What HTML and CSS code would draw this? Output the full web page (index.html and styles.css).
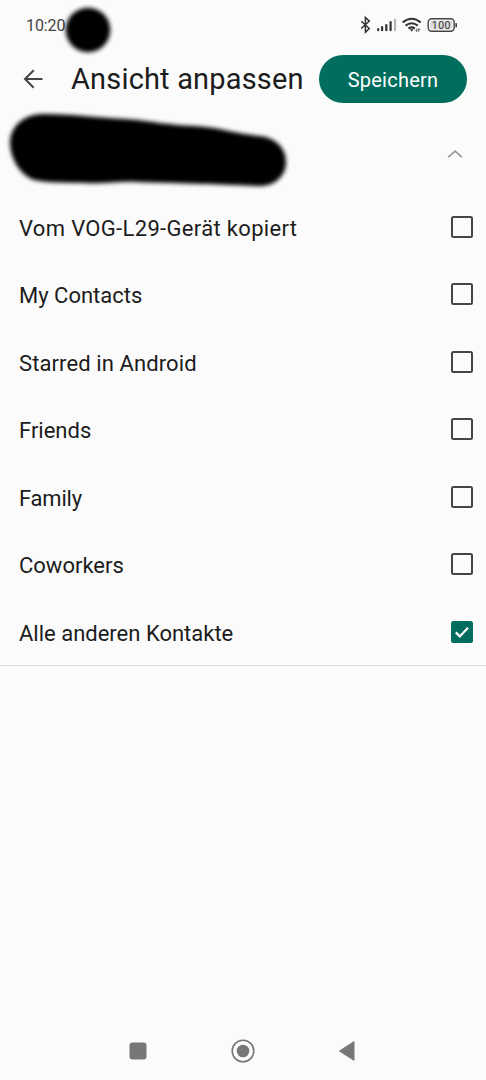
FILE: index.html
```html
<!DOCTYPE html>
<html lang="de">
<head>
<meta charset="utf-8">
<title>Ansicht anpassen</title>
<link rel="stylesheet" href="styles.css">
</head>
<body>
<div class="screen">
  <div class="status-bar">
    <span class="clock">10:20</span>
    <svg class="status-icons" width="100" height="20" viewBox="360 15 100 20">
      <path d="M361.3 21.2l8 7.3-3.9 3.7V17.4l3.9 3.7-8 7.4" fill="none" stroke="#333" stroke-width="1.5"/>
      <path d="M378.2 29v1.2M382.1 27.2v3M386.3 25v5.2M390.6 22v8.2" stroke="#333" stroke-width="2.2" stroke-linecap="round"/>
      <path d="M395 19.8v10.4" stroke="#b5b5b5" stroke-width="2.2" stroke-linecap="round"/>
      <g fill="none" stroke="#333" stroke-width="2">
        <path d="M402.7 22.4q9-7.2 18 0M405.6 25.6q6.1-4.8 12.2 0M408.5 28.6q3.2-2.4 6.4 0"/>
      </g>
      <path d="M409.8 29.3h3.8l-1.9 2.4z" fill="#333"/>
      <path d="M416.8 28.6v3l-1.2-1.2M418.8 31.6v-3l1.2 1.2" fill="none" stroke="#444" stroke-width="1"/>
      <rect x="428.2" y="18.7" width="26" height="12.5" rx="3.6" fill="#fbfbfb" stroke="#444" stroke-width="1.4"/>
      <rect x="430" y="20.5" width="22.4" height="8.9" rx="2" fill="#dedede"/>
      <path d="M456.2 23.7v3" stroke="#333" stroke-width="1.5" stroke-linecap="round"/>
      <text class="battery-text" x="441.4" y="28.7" text-anchor="middle">100</text>
    </svg>
    <svg class="redaction-dot" width="60" height="60" viewBox="58 0 60 60"><circle cx="88" cy="30" r="22.3"/></svg>
  </div>
  <header class="app-bar">
    <svg class="back" width="24" height="24" viewBox="21 67 24 24"><path d="M42.5 79H25M33.7 70.3L25 79l8.7 8.7" fill="none" stroke="#444" stroke-width="2"/></svg>
    <h1 class="title">Ansicht anpassen</h1>
    <button class="save"><span>Speichern</span></button>
  </header>
  <section class="account">
    <svg class="redaction" width="300" height="85" viewBox="0 108 300 85"><path d="M43 114C75 114 98 118 126 119C152 121 165 125 195 126C219 127 236 134 260 136C276 138 286 148 286 162C286 176 275 187 257 186C216 184 172 183 137 182C119 181 105 184 87 183C68 182 52 184 34 180C20 175 10 158 10 142C11 125 25 114 43 114Z"/></svg>
    <svg class="chevron" width="16" height="10" viewBox="447 149 16 10"><path d="M448.3 157.2l6.8-6 6.8 6" fill="none" stroke="#999" stroke-width="1.8"/></svg>
  </section>
  <ul class="list">
    <li><span class="label l1">Vom VOG-L29-Gerät kopiert</span><i class="box"></i></li>
    <li><span class="label l2">My Contacts</span><i class="box"></i></li>
    <li><span class="label l3">Starred in Android</span><i class="box"></i></li>
    <li><span class="label l4">Friends</span><i class="box"></i></li>
    <li><span class="label l5">Family</span><i class="box"></i></li>
    <li><span class="label l6">Coworkers</span><i class="box"></i></li>
    <li><span class="label l7">Alle anderen Kontakte</span><i class="box checked"><svg width="22" height="22" viewBox="0 0 22 22"><path d="M4.8 11.4l4 4 8.2-8.6" fill="none" stroke="#fff" stroke-width="2.2"/></svg></i></li>
  </ul>
  <nav class="nav-bar">
    <svg width="24" height="24" viewBox="0 0 24 24"><rect x="3.5" y="3.5" width="17" height="17" rx="3" fill="#777"/></svg>
    <svg width="24" height="24" viewBox="0 0 24 24"><circle cx="12" cy="12" r="10.8" fill="none" stroke="#777" stroke-width="1.6"/><circle cx="12" cy="12" r="6.3" fill="#777"/></svg>
    <svg width="24" height="24" viewBox="0 0 24 24"><path d="M3.8 12L17.8 3v18z" fill="#777" stroke="#777" stroke-width="1.4" stroke-linejoin="round"/></svg>
  </nav>
</div>
</body>
</html>
```

FILE: styles.css
```css
* { box-sizing: border-box; }
body { margin: 0; background: #fbfbfb; color: #1c1c1c; font-family: Roboto, sans-serif; }
.screen { width: 486px; height: 1080px; display: flex; flex-direction: column; overflow: hidden; }
.status-bar { position: relative; height: 50px; display: flex; justify-content: space-between; align-items: center; padding: 0 26px 0 26px; }
.clock { font-size: 16px; line-height: 20px; color: #444; letter-spacing: -0.1px; padding-top: 2px; }
.battery-text { font-size: 10.5px; font-weight: 400; fill: #333; letter-spacing: 0.5px; }
.redaction-dot { position: absolute; left: 58px; top: 0; filter: blur(2.2px); }
.app-bar { height: 58px; display: flex; align-items: center; padding: 0 19px 0 21px; }
.title { margin: 0 0 0 26px; flex: 1; white-space: nowrap; font-size: 29px; line-height: 36px; font-weight: 370; letter-spacing: 0.17px; }
.save { width: 148px; height: 48px; border: 0; padding: 1px 0 0; border-radius: 24px; background: #006d5d; color: #fff; font: 450 20px/24px Roboto, sans-serif; letter-spacing: 0.25px; flex: none; }
.account { height: 85px; display: flex; justify-content: space-between; align-items: center; padding-right: 23px; }
.redaction { filter: blur(2.2px); }
.chevron { margin-top: 7px; }
.list { list-style: none; margin: 0; padding: 0; height: 473px; border-bottom: 1px solid #dedede; }
.list li { height: 67.5px; display: flex; align-items: center; justify-content: space-between; padding: 0 13px 0 19px; }
.label { font-size: 22px; line-height: 28px; white-space: nowrap; font-weight: 370; padding-top: 4px; }
.l1 { letter-spacing: 0.33px; }
.l3 { letter-spacing: 0.1px; }
.l5 { letter-spacing: -0.2px; }
.box { width: 22px; height: 22px; border: 2px solid #454545; border-radius: 2.5px; flex: none; }
.box.checked { border: 0; background: #006d5d; }
.box svg { display: block; }
.nav-bar { margin-top: auto; height: 59px; display: flex; justify-content: center; align-items: center; gap: 81px; }
```
